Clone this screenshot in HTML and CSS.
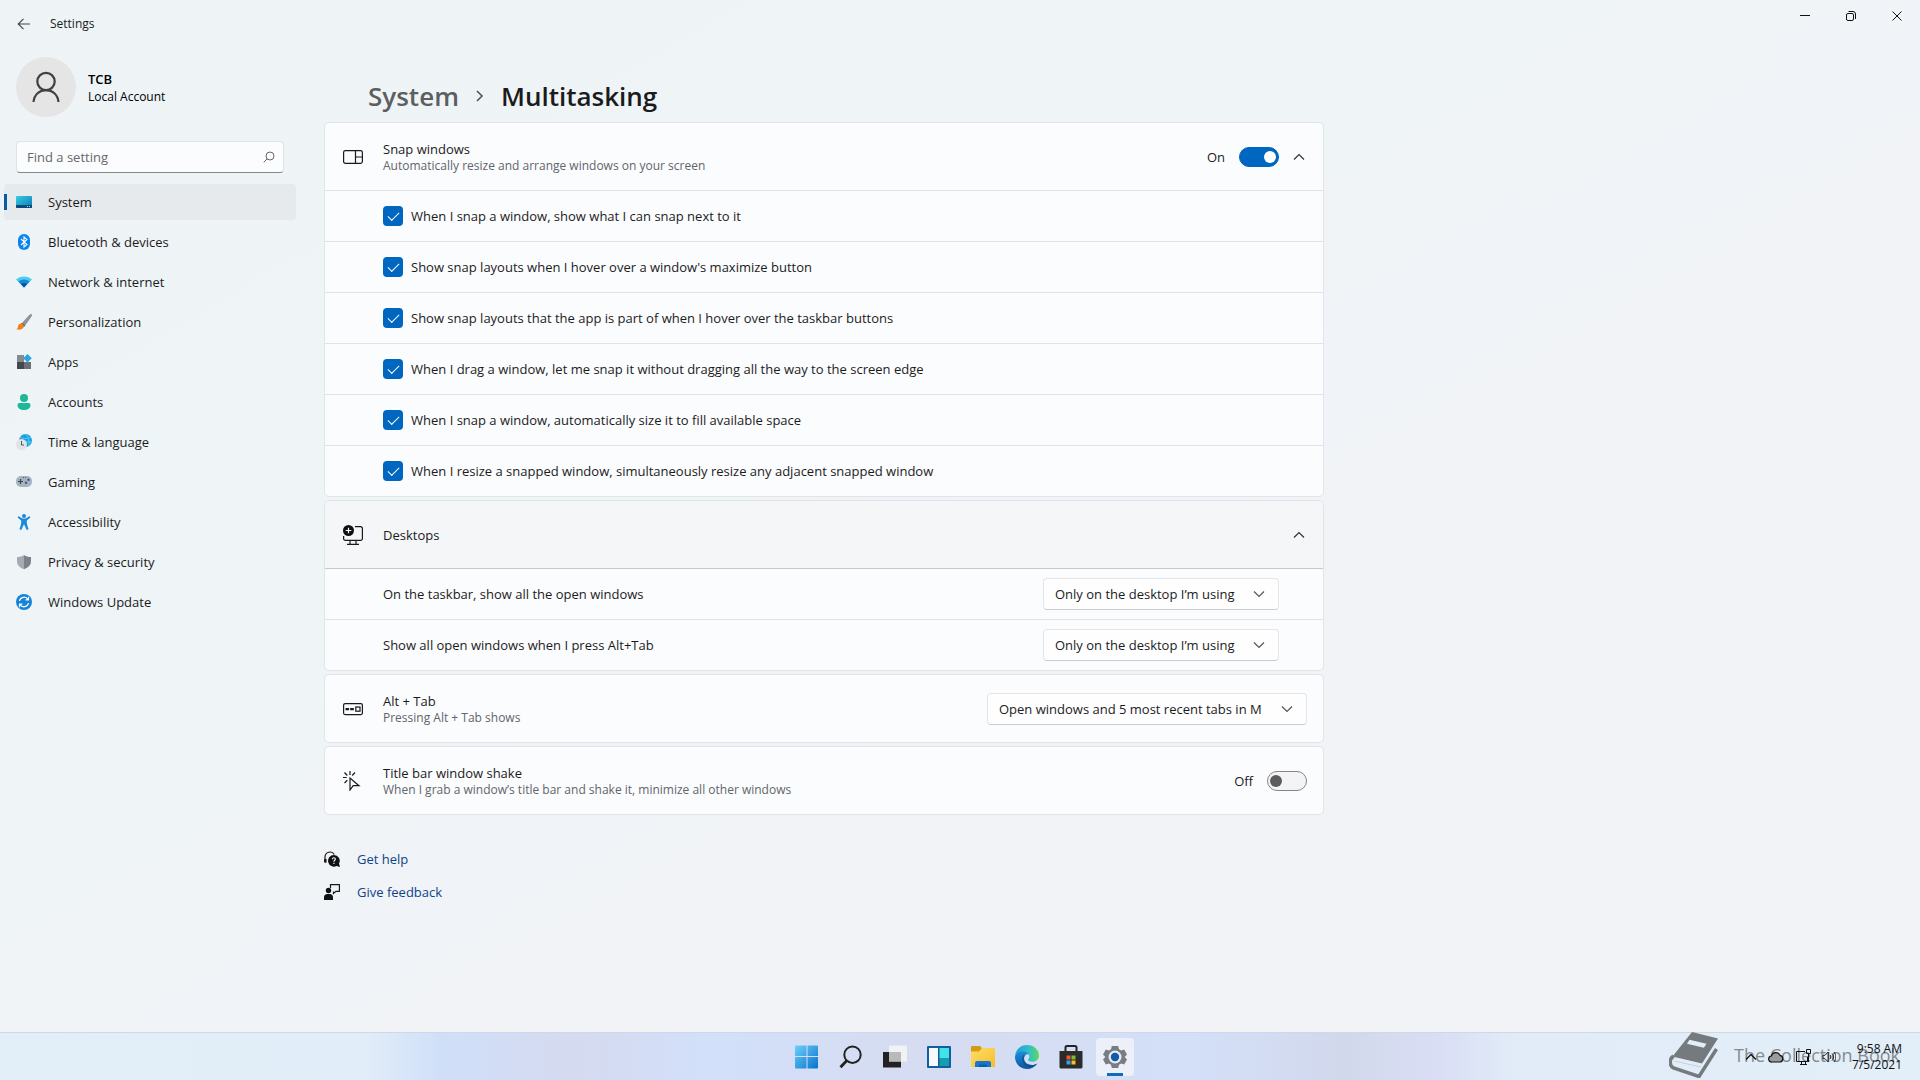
FILE: index.html
```html
<!DOCTYPE html>
<html lang="en">
<head>
    <meta charset="UTF-8">
    <meta name="viewport" content="width=device-width, initial-scale=1.0">
    <title>Settings</title>
    <link rel="stylesheet" href="styles.css">
</head>
<body>
    <header class="titlebar">
        <button class="back" aria-label="Back">
            <svg width="14" height="12" viewBox="0 0 14 12"><path d="M6.5 .8 1.2 6l5.3 5.2M1.2 6H13" fill="none" stroke="#444" stroke-width="1.1"/></svg>
        </button>
        <span class="app-name">Settings</span>
        <div class="window-buttons">
            <button aria-label="Minimize"><svg width="12" height="12" viewBox="0 0 12 12"><path d="M1 5.5h10" stroke="#111"/></svg></button>
            <button aria-label="Restore"><svg width="12" height="12" viewBox="0 0 12 12"><g fill="none" stroke="#111"><rect x="1.5" y="3.5" width="7" height="7" rx="1.5"/><path d="M3.5 1.5H8A2.5 2.5 0 0 1 10.500 4v5"/></g></svg></button>
            <button aria-label="Close"><svg width="12" height="12" viewBox="0 0 12 12"><path d="m1.500 1.500 9 9m0-9-9 9" stroke="#111"/></svg></button>
        </div>
    </header>

    <div class="window">
        <aside class="sidebar">
            <div class="account">
                <div class="avatar">
                    <svg width="30" height="32" viewBox="0 0 30 32"><g fill="none" stroke="#404040" stroke-width="2.2"><circle cx="15" cy="10.500" r="8.700"/><path d="M2.500 31c.8-7.500 6-11.800 12.500-11.800S26.700 23.500 27.500 31"/></g></svg>
                </div>
                <div>
                    <div class="account-name">TCB</div>
                    <div class="account-type">Local Account</div>
                </div>
            </div>

            <div class="search">
                <input type="text" placeholder="Find a setting" aria-label="Find a setting">
                <svg width="12" height="12" viewBox="0 0 12 12"><g fill="none" stroke="#666"><circle cx="7" cy="5" r="4"/><path d="M4.200 7.800.8 11.300"/></g></svg>
            </div>

            <nav class="nav">
                <a href="#" class="active">
                    <svg width="16" height="16" viewBox="0 0 16 16"><defs><linearGradient id="sys" x1="0" y1="0" x2="1" y2="1"><stop offset="0" stop-color="#35d0e0"/><stop offset="1" stop-color="#0c76b8"/></linearGradient></defs><rect y="2" width="16" height="12" rx="1" fill="url(#sys)"/><path d="M0 11h16v2a1 1 0 0 1-1 1H1a1 1 0 0 1-1-1z" fill="#0d4a78"/><path d="M11 12.500h1m1 0h1" stroke="#9cdcf5"/></svg>
                    System
                </a>
                <a href="#">
                    <svg width="16" height="16" viewBox="0 0 16 16"><rect x="2" width="12" height="16" rx="6" fill="#0a84f0"/><path d="m5 5 6 5.500L8 13V3l3 2.500L5 11" fill="none" stroke="#fff" stroke-width="1.100"/></svg>
                    Bluetooth &amp; devices
                </a>
                <a href="#">
                    <svg width="16" height="16" viewBox="0 0 16 16"><path d="M0 5.500C4.500 1.600 11.500 1.600 16 5.500L8 13.600z" fill="#4ccbf2"/><path d="M2.300 7.600c3.200-2.900 8.200-2.900 11.400 0L8 13.600z" fill="#158bd6"/><path d="M4.800 10c1.800-1.500 4.600-1.500 6.400 0L8 13.600z" fill="#0c559f"/></svg>
                    Network &amp; internet
                </a>
                <a href="#">
                    <svg width="16" height="16" viewBox="0 0 16 16"><path d="M15.800.3c.5.600.2 1.500-.3 2.300l-6.300 9-3-2.800L13.400.8c.8-.6 1.900-1 2.400-.5z" fill="#8f9499"/><path d="M6.200 8.800 9.200 11.600 7.900 13 4.900 10z" fill="#5c4f4b"/><path d="M4.900 9.600c1.600-.2 3.200 1.300 2.900 3C7.300 15.600 3.500 16.300.4 15.200c1.600-.8 1.300-2 1.800-3.500.4-1.200 1.400-2 2.700-2.100z" fill="#f0801e"/></svg>
                    Personalization
                </a>
                <a href="#">
                    <svg width="16" height="16" viewBox="0 0 16 16"><path d="M1 1h7v7H1z" fill="#858b91"/><path d="M1 8h7v7H1z" fill="#44484d"/><path d="M8 8h7v7H8z" fill="#6b7076"/><path d="m11.500 0 4.300 4.300-4.300 4.300-4.300-4.300z" fill="#2aa5e3"/></svg>
                    Apps
                </a>
                <a href="#">
                    <svg width="16" height="16" viewBox="0 0 16 16"><circle cx="8" cy="4" r="4" fill="#1fb596"/><path d="M3.500 9h9a2 2 0 0 1 2 2c0 3.200-2.800 5-6.500 5s-6.500-1.800-6.500-5a2 2 0 0 1 2-2z" fill="#1cb89b"/></svg>
                    Accounts
                </a>
                <a href="#">
                    <svg width="16" height="16" viewBox="0 0 16 16"><circle cx="9.500" cy="6.500" r="6.500" fill="#1a9fe0"/><path d="M9 0c3 2 4.500 5 4 12M4 3c4 2 7 2 11 0M3.500 8h12" fill="none" stroke="#55cdf2"/><circle cx="5.500" cy="10.500" r="5.500" fill="#e2e3e4"/><path d="M5.500 7v4H8" fill="none" stroke="#555"/></svg>
                    Time &amp; language
                </a>
                <a href="#">
                    <svg width="16" height="16" viewBox="0 0 16 16"><rect y="2" width="16" height="11" rx="5" fill="#a9b3bd"/><path d="M2 7.500h5M4.500 5v5" stroke="#3c434a" stroke-width="1.200"/><circle cx="12.500" cy="5.800" r="1.200" fill="#2f5f9e"/><circle cx="10" cy="8.800" r="1.200" fill="#2f5f9e"/><path d="M7 3.500h1m1 0h1" stroke="#555"/></svg>
                    Gaming
                </a>
                <a href="#">
                    <svg width="16" height="16" viewBox="0 0 16 16"><circle cx="8" cy="2" r="2" fill="#1989d8"/><path d="M2.600 2.200 6.500 4.600h3l3.900-2.400 1 1.300L10.800 6.500v3l1.700 5.800-1.800.7L8.300 10.800h-.6L5.300 16l-1.800-.7 1.700-5.800v-3L1.600 3.500z" fill="#1989d8"/></svg>
                    Accessibility
                </a>
                <a href="#">
                    <svg width="16" height="16" viewBox="0 0 16 16"><path d="M8 1c2 1.400 4.300 2 7 2v4.500c0 3.500-2.500 6-7 7.700z" fill="#7d828a"/><path d="M8 1C6 2.400 3.700 3 1 3v4.500c0 3.500 2.500 6 7 7.700z" fill="#a6abb2"/></svg>
                    Privacy &amp; security
                </a>
                <a href="#">
                    <svg width="16" height="16" viewBox="0 0 16 16"><circle cx="8" cy="8" r="8" fill="#1583d6"/><path d="M3.500 7A4.600 4.600 0 0 1 12 5.500M12.500 2.800v3H9.600M12.500 9A4.600 4.600 0 0 1 4 10.500M3.500 13.200v-3h2.900" fill="none" stroke="#fff" stroke-width="1.200"/></svg>
                    Windows Update
                </a>
            </nav>
        </aside>

        <main class="main">
            <h1 class="breadcrumb">
                <a href="#">System</a>
                <svg width="8" height="12" viewBox="0 0 8 12"><path d="m1 1 5 5-5 5" fill="none" stroke="#555" stroke-width="1.600"/></svg>
                <span>Multitasking</span>
            </h1>

            <section class="card">
                <div class="card-header">
                    <svg class="card-icon" width="20" height="20" viewBox="0 0 20 20"><g fill="none" stroke="#1a1a1a" stroke-width="1.200"><rect x=".6" y="3.600" width="18.800" height="12.800" rx="1.800"/><path d="M12.500 3.600v12.800M12.500 10h7"/></g></svg>
                    <div class="card-text">
                        <div class="card-title">Snap windows</div>
                        <div class="card-note">Automatically resize and arrange windows on your screen</div>
                    </div>
                    <label class="toggle">On <input type="checkbox" checked></label>
                    <button class="expand" aria-label="Collapse snap windows"><svg width="12" height="8" viewBox="0 0 12 8"><path d="m1 6.500 5-5 5 5" fill="none" stroke="#333" stroke-width="1.200"/></svg></button>
                </div>
                <label class="row"><input type="checkbox" checked>When I snap a window, show what I can snap next to it</label>
                <label class="row"><input type="checkbox" checked>Show snap layouts when I hover over a window's maximize button</label>
                <label class="row"><input type="checkbox" checked>Show snap layouts that the app is part of when I hover over the taskbar buttons</label>
                <label class="row"><input type="checkbox" checked>When I drag a window, let me snap it without dragging all the way to the screen edge</label>
                <label class="row"><input type="checkbox" checked>When I snap a window, automatically size it to fill available space</label>
                <label class="row"><input type="checkbox" checked>When I resize a snapped window, simultaneously resize any adjacent snapped window</label>
            </section>

            <section class="card">
                <div class="card-header hovered">
                    <svg class="card-icon" width="20" height="20" viewBox="0 0 20 20"><path d="M12 1.700h5.600A1.800 1.800 0 0 1 19.400 3.500v10.100a1.800 1.800 0 0 1-1.800 1.800H2.400A1.800 1.800 0 0 1 .6 13.600V11M7 15.400V19m6-3.600V19M4 19.300h12" fill="none" stroke="#1a1a1a" stroke-width="1.200"/><circle cx="5.500" cy="5.500" r="5.500" fill="#111"/><path d="M5.500 2.700v5.600M2.700 5.500h5.600" stroke="#fff" stroke-width="1.200"/></svg>
                    <div class="card-text">
                        <div class="card-title">Desktops</div>
                    </div>
                    <button class="expand" aria-label="Collapse desktops"><svg width="12" height="8" viewBox="0 0 12 8"><path d="m1 6.500 5-5 5 5" fill="none" stroke="#333" stroke-width="1.200"/></svg></button>
                </div>
                <div class="row">
                    <label for="taskbar-windows">On the taskbar, show all the open windows</label>
                    <div class="select">
                        <select id="taskbar-windows"><option>Only on the desktop I’m using</option></select>
                        <svg width="12" height="8" viewBox="0 0 12 8"><path d="m1 1.500 5 5 5-5" fill="none" stroke="#555" stroke-width="1.200"/></svg>
                    </div>
                </div>
                <div class="row">
                    <label for="alttab-windows">Show all open windows when I press Alt+Tab</label>
                    <div class="select">
                        <select id="alttab-windows"><option>Only on the desktop I’m using</option></select>
                        <svg width="12" height="8" viewBox="0 0 12 8"><path d="m1 1.500 5 5 5-5" fill="none" stroke="#555" stroke-width="1.200"/></svg>
                    </div>
                </div>
            </section>

            <section class="card">
                <div class="card-header">
                    <svg class="card-icon" width="20" height="20" viewBox="0 0 20 20"><rect x=".6" y="4.600" width="18.800" height="11" rx="1.500" fill="none" stroke="#1a1a1a" stroke-width="1.200"/><path d="M2.500 9h3.600v2.300H2.500zM7.200 9h3.600v2.300H7.200z" fill="#1a1a1a"/><rect x="12.800" y="8" width="4.200" height="4.200" fill="none" stroke="#1a1a1a" stroke-width="1.200"/></svg>
                    <div class="card-text">
                        <label class="card-title" for="alttab-tabs">Alt + Tab</label>
                        <div class="card-note">Pressing Alt + Tab shows</div>
                    </div>
                    <div class="select wide">
                        <select id="alttab-tabs"><option>Open windows and 5 most recent tabs in M</option></select>
                        <svg width="12" height="8" viewBox="0 0 12 8"><path d="m1 1.500 5 5 5-5" fill="none" stroke="#555" stroke-width="1.200"/></svg>
                    </div>
                </div>
            </section>

            <section class="card">
                <div class="card-header">
                    <svg class="card-icon" width="20" height="20" viewBox="0 0 20 20"><g fill="none" stroke="#1a1a1a" stroke-width="1.200"><path d="M7 7v12l3.200-4.300H16z"/><path d="M7 0v4M1.500 1.500l2.800 3M12 1.500l-2.800 3M0 6.500h3.700M1.500 12l2.800-2.700"/></g></svg>
                    <div class="card-text">
                        <div class="card-title">Title bar window shake</div>
                        <div class="card-note">When I grab a window’s title bar and shake it, minimize all other windows</div>
                    </div>
                    <label class="toggle">Off <input type="checkbox"></label>
                </div>
            </section>

            <div class="links">
                <a href="#">
                    <svg width="16" height="16" viewBox="0 0 16 16"><path d="M1 10.500V6a5 5 0 0 1 9.300-2.500M1.600 8v3.500" fill="none" stroke="#1a1a1a" stroke-width="1.200"/><path d="M0 8h2.500v3.500H0z" fill="#1a1a1a"/><path d="M9.800 4a5.800 5.800 0 1 0 2.800 10.900L16 16l-1-3.400A5.800 5.800 0 0 0 9.800 4z" fill="#111"/><path d="M8.400 8.200c0-1.900 3-1.900 3-.1 0 1.200-1.500 1.200-1.500 2.600M9.900 11.700v1.200" fill="none" stroke="#fff" stroke-width="1.100"/></svg>
                    Get help
                </a>
                <a href="#">
                    <svg width="16" height="16" viewBox="0 0 16 16"><path d="M6.500 4V.6h8.900v6.800H12L9.500 9.500V7.400" fill="none" stroke="#1a1a1a" stroke-width="1.200"/><circle cx="4.500" cy="6.500" r="2.700" fill="#111"/><path d="M0 16v-2.500A3.500 3.500 0 0 1 3.500 10h2A3.500 3.500 0 0 1 9 13.500V16z" fill="#111"/></svg>
                    Give feedback
                </a>
            </div>
        </main>
    </div>

    <footer class="taskbar">
        <div class="taskbar-apps">
            <button aria-label="Start">
                <svg width="24" height="24" viewBox="0 0 24 24"><defs><linearGradient id="win" x1="0" y1="0" x2="1" y2="1"><stop offset="0" stop-color="#6bd0fb"/><stop offset="1" stop-color="#0872ca"/></linearGradient></defs><path d="M1 .5h10.500V11H0V1.500a1 1 0 0 1 1-1zM12.500.5H22a1 1 0 0 1 1 1V11H12.500zM0 12h11.500v11.500H1a1 1 0 0 1-1-1zM12.500 12H23v10.500a1 1 0 0 1-1 1h-9.500z" fill="url(#win)"/></svg>
            </button>
            <button aria-label="Search">
                <svg width="24" height="24" viewBox="0 0 24 24"><g fill="none" stroke="#222"><circle cx="13.500" cy="9.700" r="8.200" stroke-width="2"/><path d="M7.600 15.800 1.500 22.200" stroke-width="2.800"/></g></svg>
            </button>
            <button aria-label="Task view">
                <svg width="24" height="24" viewBox="0 0 24 24"><path d="M0 7h18v15.500H0z" fill="#222"/><path d="M6 .5h18v16H6z" fill="#f4f4f4" opacity=".9"/><path d="M6 7h12v9.500H6z" fill="#b9b9b9"/></svg>
            </button>
            <button aria-label="Widgets">
                <svg width="24" height="24" viewBox="0 0 24 24"><rect y="1" width="24" height="22" rx="1" fill="#125f9e"/><path d="M2 3h9v18H2z" fill="#f7fafd"/><path d="M12.500 3H22v10h-9.500z" fill="#43e2e8"/><path d="M12.500 13H22v8h-9.500z" fill="#159cae"/></svg>
            </button>
            <button aria-label="File Explorer">
                <svg width="24" height="24" viewBox="0 0 24 24"><defs><linearGradient id="folder" x1="0" y1="0" x2="1" y2="1"><stop offset="0" stop-color="#ffdd68"/><stop offset="1" stop-color="#f5bd2b"/></linearGradient></defs><path d="M0 2a1 1 0 0 1 1-1h8l2 2v5H0z" fill="#d69a13"/><path d="M0 6.500h8L11 3h12a1 1 0 0 1 1 1v18H0z" fill="url(#folder)"/><path d="M4 22v-4a2 2 0 0 1 2-2h12a2 2 0 0 1 2 2v4z" fill="#1676cc"/><path d="M8 19.500h8V22H8z" fill="#0e5ba8"/></svg>
            </button>
            <button aria-label="Microsoft Edge">
                <svg width="24" height="24" viewBox="0 0 24 24"><defs><linearGradient id="edge1" x1="0" y1="0" x2="1" y2="0"><stop offset="0" stop-color="#239bdc"/><stop offset=".6" stop-color="#2fc2c5"/><stop offset="1" stop-color="#63d857"/></linearGradient><linearGradient id="edge2" x1="0" y1="0" x2="0" y2="1"><stop offset="0" stop-color="#1b8fdc"/><stop offset="1" stop-color="#10559f"/></linearGradient></defs><path d="M0 11C.7 4.500 5.600 0 12 0c7 0 12 5 12 10.500 0 4-3 6.300-6.500 6.300-2.500 0-4.500-.9-4.500-2 0-.7 1.300-1.300 1.300-3.300C14.300 8.500 11 6.800 7.500 6.800 4 6.800 1 8.500 0 11z" fill="url(#edge1)"/><path d="M0 12c0-3.300 3.500-5.700 7.500-5.700 3 0 5.500 1.300 6.400 3.200C11.500 8.600 9 10.500 9 13.600c0 3.800 3.500 6.400 8 6.400 2 0 3.700-.6 5.300-1.500C20 22 16.300 24 12 24 5.300 24 0 18.600 0 12z" fill="url(#edge2)"/><path d="M8.500 10C7 11.500 6.500 13.500 7 15.800 8 20 12 22.500 16.500 22.600c2.300-.8 4.400-2.200 5.800-4.100C20.700 19.400 19 20 17 20c-4.500 0-8-2.600-8-6.400 0-1.300.4-2.400 1-3.200z" fill="#0b4584" opacity=".55"/></svg>
            </button>
            <button aria-label="Microsoft Store">
                <svg width="24" height="24" viewBox="0 0 24 24"><path d="M6.500 8V2.500A1.500 1.500 0 0 1 8 1h8a1.500 1.500 0 0 1 1.500 1.500V8" fill="none" stroke="#222" stroke-width="2"/><path d="M.5 6h23v16a1.500 1.500 0 0 1-1.500 1.500H2A1.500 1.500 0 0 1 .5 22z" fill="#2b2b2b"/><path d="M7.500 10.500h4v4h-4z" fill="#f0592b"/><path d="M12.500 10.500h4v4h-4z" fill="#80b92b"/><path d="M7.500 15.500h4v4h-4z" fill="#2aa6ea"/><path d="M12.500 15.500h4v4h-4z" fill="#fcbb23"/></svg>
            </button>
            <button class="open" aria-label="Settings">
                <svg width="24" height="24" viewBox="0 0 24 24"><path d="M8.800 1h6.400l.8 3.200 2.200 1.200 3-1L24 9.500 21.700 12l2.300 2.500-2.800 5.100-3-1-2.200 1.200-.8 3.200H8.800L8 19.800l-2.200-1.200-3 1L0 14.500 2.300 12 0 9.500l2.800-5.100 3 1L8 4.200z" fill="#767d83"/><circle cx="12" cy="12" r="6.500" fill="#e8ebee"/><circle cx="12" cy="12" r="4.200" fill="#105ca8"/></svg>
            </button>
        </div>

        <div class="watermark">
            <svg width="50" height="46" viewBox="0 0 50 46"><path d="M23 0 49 6.500 33 31.500 3.500 24.500z" fill="#757a7e"/><path d="m20.500 7.800 17 4-2.600 4-17-4z" fill="#e3eef8"/><path d="M4.500 24C0 27.500 0 33 4.500 36L30 44.500 47.500 17" fill="none" stroke="#757a7e" stroke-width="3.500"/><path d="m5 29 27 6" stroke="#c9d0d6"/></svg>
            <span>The Collection Book</span>
        </div>

        <div class="tray">
            <svg width="12" height="8" viewBox="0 0 12 8"><path d="m1 6.500 5-5 5 5" fill="none" stroke="#111" stroke-width="1.300"/></svg>
            <svg width="16" height="12" viewBox="0 0 16 12"><path d="M4 11a3 3 0 0 1-.6-6A4.600 4.600 0 0 1 12 4.300 3.400 3.400 0 0 1 12 11z" fill="#9b9b9b" stroke="#111" stroke-width="1.200"/></svg>
            <svg width="16" height="16" viewBox="0 0 16 16"><path d="M10 2.500H1.500v10h11V8M5 15.500h7M6.500 13v2m4-2v2M11.500.5h4v4h-4zM13.500 5v8" fill="none" stroke="#111"/></svg>
            <svg width="14" height="12" viewBox="0 0 14 12"><path d="M1 4.300h2L6.200 1v10L3 7.700H1zM8 4c1 1.200 1 2.800 0 4M10 2.500c2 2 2 5 0 7M12 1c2.500 3 2.500 7 0 10" fill="none" stroke="#222"/></svg>
            <div class="clock">
                <div>9:58 AM</div>
                <div>7/5/2021</div>
            </div>
        </div>
    </footer>
</body>
</html>
```
FILE: styles.css
```css
* {
    box-sizing: border-box;
}

body {
    margin: 0;
    min-height: 100vh;
    display: flex;
    flex-direction: column;
    background: linear-gradient(150deg, #eef4f6 0%, #eff4f7 40%, #f1f3f7 60%, #f1f3f6 100%);
    color: #1b1b1b;
    font-family: "Open Sans", "Noto Sans", sans-serif;
    font-size: 13px;
    line-height: 20px;
}

button, input, select {
    font: inherit;
    color: inherit;
}

button {
    border: none;
    background: none;
    padding: 0;
    display: grid;
    place-items: center;
}

a {
    color: inherit;
    text-decoration: none;
}

svg {
    display: block;
    flex: none;
}

/* title bar */
.titlebar {
    display: flex;
    align-items: center;
    height: 40px;
    padding-top: 8px;
    padding-left: 17px;
}

.app-name {
    margin-left: 19px;
    font-size: 12px;
}

.window-buttons {
    display: flex;
    align-self: flex-start;
    margin-left: auto;
}

.window-buttons button {
    width: 46px;
    height: 16px;
}

.window {
    flex: 1;
    display: flex;
}

/* sidebar */
.sidebar {
    width: 300px;
    flex: none;
    padding-top: 17px;
}

.account {
    display: flex;
    align-items: center;
    gap: 12px;
    padding-left: 16px;
    color: #000;
}

.avatar {
    width: 60px;
    height: 60px;
    border-radius: 50%;
    background: #e5e5e5;
    display: grid;
    place-items: center;
}

.account-name {
    font-weight: 600;
    line-height: 20px;
}

.account-type {
    font-size: 12px;
    line-height: 16px;
}

.search {
    display: grid;
    align-items: center;
    margin: 24px 16px 11px;
}

.search > * {
    grid-area: 1 / 1;
}

.search input {
    width: 100%;
    height: 32px;
    padding: 0 36px 0 10px;
    border: 1px solid #dfe3e6;
    border-bottom-color: #868a8d;
    border-radius: 4px;
    background: #fbfcfd;
}

.search input::placeholder {
    color: #65686a;
    opacity: 1;
}

.search svg {
    justify-self: end;
    margin-right: 9px;
}

.nav {
    display: flex;
    flex-direction: column;
    gap: 4px;
    padding: 0 4px;
}

.nav a {
    display: flex;
    align-items: center;
    gap: 16px;
    height: 36px;
    padding-left: 12px;
    border-radius: 4px;
}

.nav a.active {
    background: linear-gradient(#0a5cab, #0a5cab) 0 50% / 3px 16px no-repeat, #e6eaec;
}

/* page */
.main {
    flex: 1;
    max-width: 1048px;
    padding: 36px 24px;
}

.breadcrumb {
    display: flex;
    align-items: center;
    gap: 17px;
    margin: 0 0 6px 44px;
    font-size: 26px;
    font-weight: 600;
    line-height: 40px;
}

.breadcrumb a {
    color: #5b5f61;
}

.card {
    margin-bottom: 3px;
    border: 1px solid #e1e4e8;
    border-radius: 5px;
    background: #fbfcfe;
    overflow: hidden;
}

.card-header {
    display: flex;
    align-items: center;
    min-height: 67px;
    padding: 0 16px 0 18px;
}

.card-header.hovered {
    background: #f5f6f8;
}

.card-header.hovered + .row {
    border-top-color: #c6c8cb;
}

.card-icon {
    margin-right: 20px;
}

.card-text {
    flex: 1;
}

.card-title {
    display: block;
    line-height: 18px;
}

.card-note {
    color: #62656a;
    font-size: 12px;
    line-height: 16px;
}

.row {
    display: flex;
    align-items: center;
    gap: 8px;
    height: 51px;
    padding: 0 44px 0 58px;
    border-top: 1px solid #e1e3e7;
}

.row > label {
    flex: 1;
}

.row input {
    appearance: none;
    display: grid;
    place-items: center;
    width: 20px;
    height: 20px;
    margin: 0;
    border-radius: 4px;
    background: #0067c0;
}

.row input::before {
    content: "";
    width: 10px;
    height: 5px;
    margin-bottom: 3px;
    border: solid #fff;
    border-width: 0 0 1px 1px;
    transform: rotate(-45deg);
}

.toggle {
    display: flex;
    align-items: center;
    gap: 14px;
}

.toggle input {
    appearance: none;
    display: flex;
    align-items: center;
    width: 40px;
    height: 20px;
    margin: 0;
    padding: 0 2px;
    border: 1px solid #858585;
    border-radius: 10px;
    background: #f4f4f6;
}

.toggle input::before {
    content: "";
    width: 12px;
    height: 12px;
    border-radius: 50%;
    background: #5c5c5c;
}

.toggle input:checked {
    justify-content: flex-end;
    border-color: #0067c0;
    background: #0067c0;
}

.toggle input:checked::before {
    background: #fff;
}

.expand {
    width: 16px;
    height: 32px;
}

.toggle + .expand {
    margin-left: 12px;
}

.select {
    display: grid;
    align-items: center;
    width: 236px;
}

.select.wide {
    width: 320px;
}

.select > * {
    grid-area: 1 / 1;
}

.select select {
    appearance: none;
    width: 100%;
    height: 32px;
    padding: 0 36px 0 11px;
    border: 1px solid #e4e5e8;
    border-bottom-color: #cccdd0;
    border-radius: 4px;
    background: #fefeff;
}

.select svg {
    justify-self: end;
    margin-right: 14px;
    pointer-events: none;
}

.links {
    display: flex;
    flex-direction: column;
    align-items: flex-start;
    gap: 13px;
    margin-top: 34px;
    color: #0f4388;
}

.links a {
    display: flex;
    align-items: center;
    gap: 17px;
}

/* taskbar */
.taskbar {
    position: relative;
    display: grid;
    grid-template-columns: 1fr auto 1fr;
    align-items: center;
    height: 48px;
    padding-left: 2px;
    border-top: 1px solid #cfd8e3;
    background: linear-gradient(90deg, #e2eff8 0%, #e1edf8 19%, #d0dff9 23%, #d5daef 30%, #d2e0fa 37%, #d6dcf1 48%, #d3e0f8 62%, #d2d8ec 70%, #d9def4 75%, #e1ecf8 79%, #e2eef8 100%);
}

.taskbar-apps {
    grid-column: 2;
    display: flex;
    gap: 6px;
}

.taskbar-apps button {
    width: 38px;
    height: 38px;
    border-radius: 4px;
}

.taskbar-apps .open {
    background: linear-gradient(#0f6cbd, #0f6cbd) 50% 100% / 16px 3px no-repeat, #edf0f8;
}

.tray {
    position: relative;
    z-index: 1;
    grid-column: 3;
    display: flex;
    align-items: center;
    justify-content: flex-end;
    gap: 11px;
    padding-right: 18px;
    color: #111;
}

.clock {
    width: 55px;
    font-size: 12px;
    line-height: 16px;
    text-align: right;
}

/* sits under the tray icons and the clock */
.watermark {
    position: absolute;
    right: 20px;
    bottom: 2px;
    display: flex;
    align-items: center;
    gap: 15px;
    color: #858a8f;
    font-size: 18px;
    pointer-events: none;
}
```
